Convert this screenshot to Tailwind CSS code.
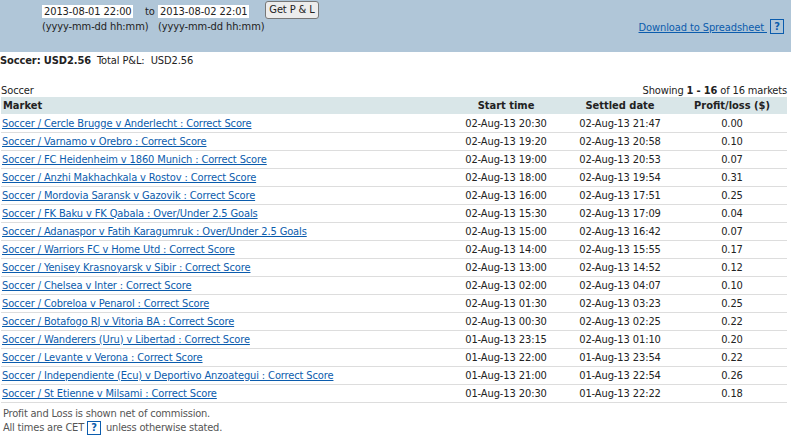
<!DOCTYPE html>
<html><head><meta charset="utf-8"><script src="https://cdn.jsdelivr.net/npm/@tailwindcss/browser@4"></script></head>
<body class="bg-white overflow-hidden">
<div class="w-[791px] h-[439px] overflow-hidden font-['DejaVu_Sans',sans-serif] [font-stretch:condensed] text-[11px] leading-[14px] tracking-[-0.1px] text-[#222]">
 <div class="h-[52px] bg-[#b0c6d8] flex">
  <div class="pl-[42px] pt-[4px] shrink-0">
   <div class="flex items-center">
    <div class="w-[91px] h-[13px] bg-white pl-[2px] leading-[13px] mr-[12px] whitespace-nowrap">2013-08-01 22:00</div>
    <div class="w-[13px]">to</div>
    <div class="w-[91px] h-[13px] bg-white pl-[2px] leading-[13px] whitespace-nowrap">2013-08-02 22:01</div>
    <button class="ml-[16px] -mt-[3px] w-[54px] h-[18px] bg-[#ececec] border border-[#777] rounded-[3px] text-center leading-[14px]">Get P &amp; L</button>
   </div>
   <div class="flex mt-[1px] whitespace-nowrap">
    <div class="w-[116px]">(yyyy-mm-dd hh:mm)</div>
    <div>(yyyy-mm-dd hh:mm)</div>
   </div>
  </div>
  <div class="ml-auto pt-[21px] pr-[7px] flex items-start">
   <a class="text-[#0b5cad] underline">Download to Spreadsheet&nbsp;</a>
   <span class="ml-[3px] -mt-[2px] w-[14px] h-[15px] border border-[#0b5cad] text-[#0b5cad] font-bold flex items-center justify-center leading-none">?</span>
  </div>
 </div>
 <div class="mt-[1px] pt-[1px] flex gap-[6px] h-[30px]"><span class="font-bold">Soccer: USD2.56</span><span>Total P&amp;L:&nbsp; USD2.56</span></div>
 <div class="flex justify-between px-[1px] pt-[1px] h-[14px]"><span>Soccer</span><span class="pr-[3px] tracking-[-0.15px]">Showing <b>1 - 16</b> of 16 markets</span></div>
 <table class="ml-[1px] w-[786px] border-collapse table-fixed [&_td]:pt-[1px] [&_tbody_tr:first-child_td]:pt-[2px] [&_a]:text-[#0b5cad] [&_a]:underline [&_a]:tracking-[-0.12px]">
  <thead><tr class="bg-[#d9e6e8] h-[17px] font-bold tracking-normal">
   <th class="text-left pl-[2px] pt-[1px] w-[448px] font-bold">Market</th><th class="w-[114px] pt-[1px] font-bold">Start time</th><th class="w-[114px] pt-[1px] font-bold">Settled date</th><th class="pt-[1px] font-bold">Profit/loss ($)</th></tr></thead>
  <tbody class="text-center">
   <tr class="h-[18px] border-b border-[#ddd]"><td class="text-left pl-[1px]"><a>Soccer / Cercle Brugge v Anderlecht : Correct Score</a></td><td>02-Aug-13 20:30</td><td>02-Aug-13 21:47</td><td>0.00</td></tr>
   <tr class="h-[18px] border-b border-[#ddd]"><td class="text-left pl-[1px]"><a>Soccer / Varnamo v Orebro : Correct Score</a></td><td>02-Aug-13 19:20</td><td>02-Aug-13 20:58</td><td>0.10</td></tr>
   <tr class="h-[18px] border-b border-[#ddd]"><td class="text-left pl-[1px]"><a>Soccer / FC Heidenheim v 1860 Munich : Correct Score</a></td><td>02-Aug-13 19:00</td><td>02-Aug-13 20:53</td><td>0.07</td></tr>
   <tr class="h-[18px] border-b border-[#ddd]"><td class="text-left pl-[1px]"><a>Soccer / Anzhi Makhachkala v Rostov : Correct Score</a></td><td>02-Aug-13 18:00</td><td>02-Aug-13 19:54</td><td>0.31</td></tr>
   <tr class="h-[18px] border-b border-[#ddd]"><td class="text-left pl-[1px]"><a>Soccer / Mordovia Saransk v Gazovik : Correct Score</a></td><td>02-Aug-13 16:00</td><td>02-Aug-13 17:51</td><td>0.25</td></tr>
   <tr class="h-[18px] border-b border-[#ddd]"><td class="text-left pl-[1px]"><a>Soccer / FK Baku v FK Qabala : Over/Under 2.5 Goals</a></td><td>02-Aug-13 15:30</td><td>02-Aug-13 17:09</td><td>0.04</td></tr>
   <tr class="h-[18px] border-b border-[#ddd]"><td class="text-left pl-[1px]"><a>Soccer / Adanaspor v Fatih Karagumruk : Over/Under 2.5 Goals</a></td><td>02-Aug-13 15:00</td><td>02-Aug-13 16:42</td><td>0.07</td></tr>
   <tr class="h-[18px] border-b border-[#ddd]"><td class="text-left pl-[1px]"><a>Soccer / Warriors FC v Home Utd : Correct Score</a></td><td>02-Aug-13 14:00</td><td>02-Aug-13 15:55</td><td>0.17</td></tr>
   <tr class="h-[18px] border-b border-[#ddd]"><td class="text-left pl-[1px]"><a>Soccer / Yenisey Krasnoyarsk v Sibir : Correct Score</a></td><td>02-Aug-13 13:00</td><td>02-Aug-13 14:52</td><td>0.12</td></tr>
   <tr class="h-[18px] border-b border-[#ddd]"><td class="text-left pl-[1px]"><a>Soccer / Chelsea v Inter : Correct Score</a></td><td>02-Aug-13 02:00</td><td>02-Aug-13 04:07</td><td>0.10</td></tr>
   <tr class="h-[18px] border-b border-[#ddd]"><td class="text-left pl-[1px]"><a>Soccer / Cobreloa v Penarol : Correct Score</a></td><td>02-Aug-13 01:30</td><td>02-Aug-13 03:23</td><td>0.25</td></tr>
   <tr class="h-[18px] border-b border-[#ddd]"><td class="text-left pl-[1px]"><a>Soccer / Botafogo RJ v Vitoria BA : Correct Score</a></td><td>02-Aug-13 00:30</td><td>02-Aug-13 02:25</td><td>0.22</td></tr>
   <tr class="h-[18px] border-b border-[#ddd]"><td class="text-left pl-[1px]"><a>Soccer / Wanderers (Uru) v Libertad : Correct Score</a></td><td>01-Aug-13 23:15</td><td>02-Aug-13 01:10</td><td>0.20</td></tr>
   <tr class="h-[18px] border-b border-[#ddd]"><td class="text-left pl-[1px]"><a>Soccer / Levante v Verona : Correct Score</a></td><td>01-Aug-13 22:00</td><td>01-Aug-13 23:54</td><td>0.22</td></tr>
   <tr class="h-[18px] border-b border-[#ddd]"><td class="text-left pl-[1px]"><a>Soccer / Independiente (Ecu) v Deportivo Anzoategui : Correct Score</a></td><td>01-Aug-13 21:00</td><td>01-Aug-13 22:54</td><td>0.26</td></tr>
   <tr class="h-[18px] border-b border-[#ddd]"><td class="text-left pl-[1px]"><a>Soccer / St Etienne v Milsami : Correct Score</a></td><td>01-Aug-13 20:30</td><td>01-Aug-13 22:22</td><td>0.18</td></tr>
  </tbody>
 </table>
 <div class="pl-[3px] pt-[4px] text-[#555] leading-[14px] tracking-[-0.2px]">
  <div>Profit and Loss is shown net of commission.</div>
  <div class="flex items-center">All times are CET<span class="ml-[3px] mr-[5px] w-[14px] h-[14px] border border-[#0b5cad] text-[#0b5cad] font-bold flex items-center justify-center leading-none">?</span>unless otherwise stated.</div>
 </div>
</div>
</body></html>
